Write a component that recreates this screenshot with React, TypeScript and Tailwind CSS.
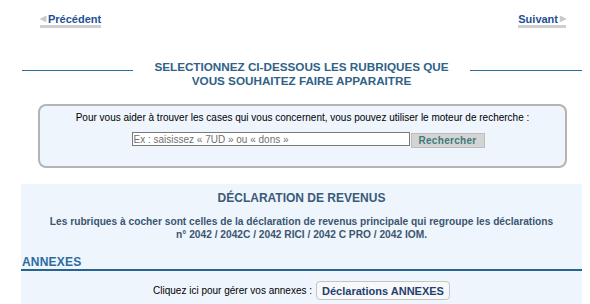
export default function App() {
	return (
		<div className="w-[590px] h-[304px] overflow-hidden bg-white font-['Liberation_Sans',Arial,sans-serif]">
			<div className="flex justify-between pl-[40px] pr-[24px] pt-[12px] h-[28px]">
				<a className="flex items-center border-b-[3px] border-[#cfcfcf] h-[16px] text-[11px] font-bold text-[#1f4f95] leading-[14px]">
					<span className="text-[#c8c8c8] text-[8px] mr-[2px]">◀</span>
					Précédent
				</a>
				<a className="flex items-center border-b-[3px] border-[#cfcfcf] h-[16px] text-[11px] font-bold text-[#1f4f95] leading-[14px]">
					Suivant
					<span className="text-[#c8c8c8] text-[8px] ml-[2px]">▶</span>
				</a>
			</div>

			<div className="flex items-start mt-[32px] pl-[22px] pr-[8px]">
				<div className="w-[111px] border-t border-[#2a6e9c] mt-[10px]" />
				<h2 className="flex-1 text-center text-[11.7px] font-bold text-[#2f6287] leading-[14px]">
					SELECTIONNEZ CI-DESSOUS LES RUBRIQUES QUE
					<br />
					VOUS SOUHAITEZ FAIRE APPARAITRE
				</h2>
				<div className="w-[112px] border-t border-[#2a6e9c] mt-[10px]" />
			</div>

			<div className="mx-[38px] mt-[16px] w-[529px] h-[64px] border-2 border-[#b4b4b4] rounded-[8px] bg-[#eef5fd] flex flex-col items-center pt-[5px]">
				<p className="text-[10px] text-black leading-[13px]">
					Pour vous aider à trouver les cases qui vous concernent, vous pouvez utiliser le moteur de recherche :
				</p>
				<div className="flex items-start mt-[8px] ml-[11px]">
					<input
						className="w-[278px] h-[14px] border border-[#7a7a7a] bg-white text-[10px] px-[1px] leading-[12px] text-[#666] placeholder-[#707070] outline-none"
						placeholder="Ex : saisissez « 7UD » ou « dons »"
					/>
					<button className="w-[74px] h-[15px] mt-[1px] ml-[1px] bg-[#d4d4d4] border border-[#bdbdbd] text-[10px] font-bold text-[#3d7a78] leading-[12px] tracking-[0.3px]">
						Rechercher
					</button>
				</div>
			</div>

			<div className="mx-[21px] mt-[16px] w-[561px] h-[130px] bg-[#eef5fd]">
				<h3 className="text-center text-[12px] font-bold text-[#3b5a78] pt-[6px] leading-[16px]">
					DÉCLARATION DE REVENUS
				</h3>
				<p className="text-center text-[10.2px] font-bold text-[#3b5670] leading-[13px] mt-[9px]">
					Les rubriques à cocher sont celles de la déclaration de revenus principale qui regroupe les déclarations
					<br />
					n° 2042 / 2042C / 2042 RICI / 2042 C PRO / 2042 IOM.
				</p>
				<h3 className="text-[12px] font-bold text-[#2d6c9e] leading-[14px] mt-[14px] pl-[1px] border-b-2 border-[#25658f] tracking-[0.2px]">
					ANNEXES
				</h3>
				<div className="flex items-center justify-center mt-[10px] text-[10px] text-black">
					<span>Cliquez ici pour gérer vos annexes :</span>
					<button className="ml-[4px] h-[19px] px-[5px] rounded-[4px] border border-[#c4c4c4] bg-[#f8f8f8] text-[11px] font-bold text-[#1f3f72] leading-[14px]">
						Déclarations ANNEXES
					</button>
				</div>
			</div>
		</div>
	);
}
